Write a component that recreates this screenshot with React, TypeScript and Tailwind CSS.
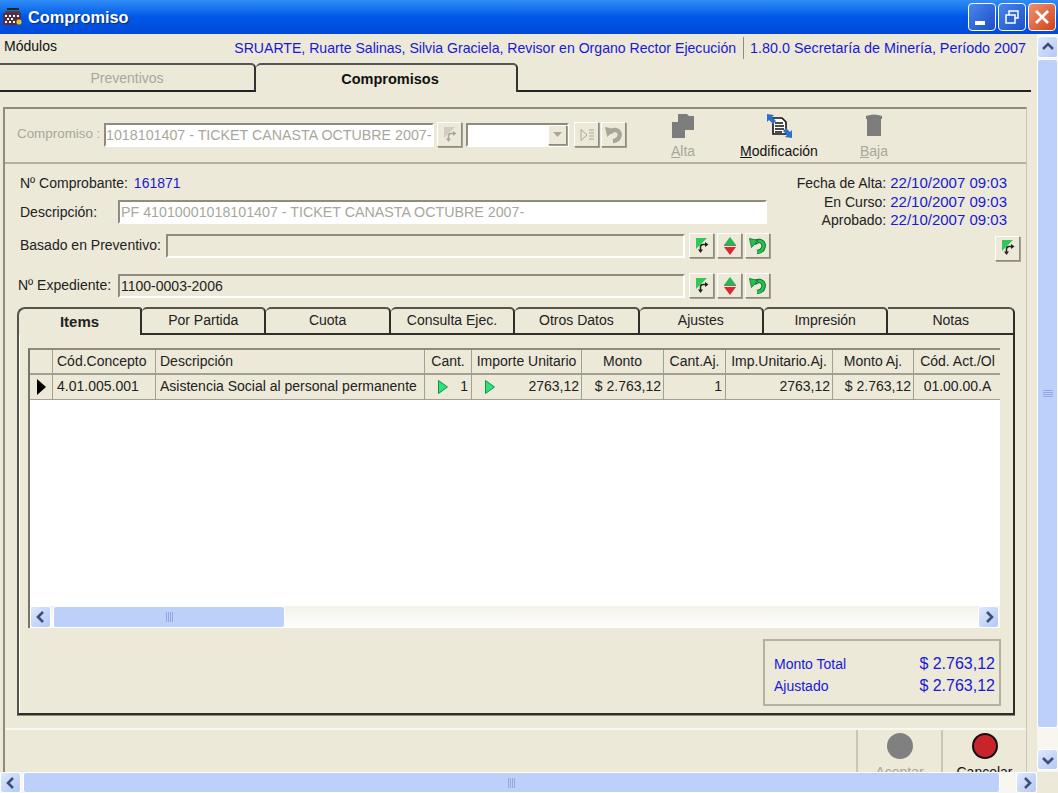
import type { ReactNode } from 'react';

const raised = 'border border-t-white border-l-white border-r-[#8c8a7c] border-b-[#8c8a7c] shadow-[1px_1px_0_#a5a294]';
const sunken = 'border-2 border-t-[#8f8c7e] border-l-[#8f8c7e] border-r-white border-b-white';

function NavIcon({ faded }: { faded?: boolean }) {
  return (
    <svg width="16" height="18" viewBox="0 0 16 18">
      <path d="M2 1h11L2 12z" fill={faded ? '#cfcdc0' : '#2fc75a'} />
      <path d="M12 7.500H9Q6.500 7.500 6.500 10v3" fill="none" stroke={faded ? '#a8a699' : '#222'} strokeWidth="1.500" />
      <path d="M11 5l3.500 2.500L11 10z" fill={faded ? '#a8a699' : '#222'} />
      <path d="M4 12.500h5L6.500 16z" fill={faded ? '#a8a699' : '#222'} />
    </svg>
  );
}

function UpDownIcon() {
  return (
    <svg width="16" height="20" viewBox="0 0 16 20">
      <path d="M8 1l6 8H2z" fill="#25b84f" />
      <path d="M2 9.500h12" stroke="#777" strokeWidth="1" />
      <path d="M2 11h12l-6 8z" fill="#dc2630" />
    </svg>
  );
}

function UndoIcon({ faded }: { faded?: boolean }) {
  const c = faded ? '#a8a699' : '#22c24f';
  return (
    <svg width="20" height="20" viewBox="0 0 20 20">
      <path d="M6 8Q8 4.500 12 5Q16.500 6.500 15.500 11Q14.500 15.500 9 16" fill="none" stroke={faded ? c : '#0b6f2a'} strokeWidth="4.400" />
      <path d="M6 8Q8 4.500 12 5Q16.500 6.500 15.500 11Q14.500 15.500 9 16" fill="none" stroke={c} strokeWidth="2.600" />
      <path d="M1.500 2.500l8.500 2-6.500 7z" fill={c} stroke={faded ? c : '#0b6f2a'} strokeWidth="0.800" />
    </svg>
  );
}

function Bevel({ children, className = '' }: { children?: ReactNode; className?: string }) {
  return (
    <div className={'flex h-[25px] w-[25px] shrink-0 items-center justify-center bg-[#ece9d8] ' + raised + ' ' + className}>
      {children}
    </div>
  );
}

function RowTools() {
  return (
    <div className="ml-[4px] flex gap-[3px]">
      <Bevel><NavIcon /></Bevel>
      <Bevel><UpDownIcon /></Bevel>
      <Bevel><UndoIcon /></Bevel>
    </div>
  );
}

function Chevron({ dir }: { dir: 'left' | 'right' | 'up' | 'down' }) {
  const d = {
    left: 'M10 3L5 8l5 5',
    right: 'M6 3l5 5-5 5',
    up: 'M3 10l5-5 5 5',
    down: 'M3 6l5 5 5-5',
  }[dir];
  return (
    <svg width="16" height="16" viewBox="0 0 16 16">
      <path d={d} fill="none" stroke="#3d4f7c" strokeWidth="2.6" />
    </svg>
  );
}

function ScrollBtn({ dir, className = '' }: { dir: 'left' | 'right' | 'up' | 'down'; className?: string }) {
  return (
    <div className={'flex shrink-0 items-center justify-center rounded-[3px] border border-white bg-gradient-to-br from-[#dfe8fd] to-[#b4c8f5] ' + className}>
      <Chevron dir={dir} />
    </div>
  );
}

function Grip({ vertical }: { vertical?: boolean }) {
  return (
    <div className={vertical ? 'flex flex-col gap-[1px]' : 'flex gap-[1px]'}>
      {[0, 1, 2, 3].map((i) => (
        <div key={i} className={(vertical ? 'h-[1px] w-[10px]' : 'h-[10px] w-[1px]') + ' bg-[#8fa8e0]'} />
      ))}
    </div>
  );
}

function ToolAction({ icon, label, hot, disabled, className = '' }: { icon: ReactNode; label: string; hot: string; disabled?: boolean; className?: string }) {
  return (
    <div className={'flex flex-col items-center ' + className}>
      <div className="flex h-[28px] items-center">{icon}</div>
      <div className={'mt-[3px] text-[14px] leading-[16px] ' + (disabled ? 'text-[#a9a79b]' : 'text-[#111]')}>
        <span className="underline">{hot}</span>
        {label}
      </div>
    </div>
  );
}

const columns = [
  { w: 'w-[23px]', head: '', cell: '', h: '', c: '' },
  { w: 'w-[103px]', head: 'Cód.Concepto', cell: '4.01.005.001', h: 'text-left pl-[4px]', c: 'text-left pl-[4px]' },
  { w: 'w-[269px]', head: 'Descripción', cell: 'Asistencia Social al personal permanente', h: 'text-left pl-[4px]', c: 'text-left pl-[4px]' },
  { w: 'w-[47px]', head: 'Cant.', cell: '1', h: 'text-center', c: 'text-right pr-[3px]' },
  { w: 'w-[110px]', head: 'Importe Unitario', cell: '2763,12', h: 'text-center', c: 'text-right pr-[2px]' },
  { w: 'w-[82px]', head: 'Monto', cell: '$ 2.763,12', h: 'text-center', c: 'text-right pr-[2px]' },
  { w: 'w-[62px]', head: 'Cant.Aj.', cell: '1', h: 'text-center', c: 'text-right pr-[3px]' },
  { w: 'w-[107px]', head: 'Imp.Unitario.Aj.', cell: '2763,12', h: 'text-center', c: 'text-right pr-[2px]' },
  { w: 'w-[81px]', head: 'Monto Aj.', cell: '$ 2.763,12', h: 'text-center', c: 'text-right pr-[2px]' },
  { w: 'w-[88px]', head: 'Cód. Act./Ol', cell: '01.00.00.A', h: 'text-center', c: 'text-center' },
];

function Arrow() {
  return (
    <svg width="12" height="16" viewBox="0 0 12 16" className="absolute left-[12px] top-[4px]">
      <path d="M1.500 1.500L10.500 8l-9 6.500z" fill="#2ee27a" stroke="#12924a" strokeWidth="1" />
    </svg>
  );
}

function ItemsGrid() {
  return (
    <div className="flex h-[280px] w-[972px] flex-col overflow-hidden border-l-2 border-t-2 border-l-[#77756a] border-t-[#8f8c7e] bg-white">
      <div className="flex h-[25px] shrink-0 bg-[#ece9d8]">
        {columns.map((col, i) => (
          <div key={i} className={col.w + ' ' + col.h + ' shrink-0 overflow-hidden whitespace-nowrap border-b-2 border-r border-b-[#a3a091] border-r-[#a3a091] text-[14px] leading-[22px] text-[#222]'}>
            {col.head}
          </div>
        ))}
      </div>
      <div className="flex h-[25px] shrink-0 bg-[#ece9d8]">
        {columns.map((col, i) => (
          <div key={i} className={col.w + ' ' + col.c + ' relative shrink-0 overflow-hidden whitespace-nowrap border-b border-r border-b-[#a3a091] border-r-[#a3a091] text-[14px] leading-[22px] text-[#222]'}>
            {i === 0 && (
              <svg width="12" height="16" viewBox="0 0 12 16" className="absolute left-[6px] top-[4px]">
                <path d="M1 0l9 8-9 8z" fill="#000" />
              </svg>
            )}
            {(i === 3 || i === 4) && <Arrow />}
            {col.cell}
          </div>
        ))}
      </div>
      <div className="flex-1" />
      <div className="flex h-[22px] shrink-0 items-stretch gap-[2px] bg-gradient-to-b from-[#f2f1ea] to-white pr-[1px]">
        <ScrollBtn dir="left" className="w-[21px]" />
        <div className="flex w-[232px] items-center justify-center rounded-[3px] border border-white bg-[#bdd0fa]">
          <Grip />
        </div>
        <div className="flex-1" />
        <ScrollBtn dir="right" className="w-[21px]" />
      </div>
    </div>
  );
}

const tabs = ['Por Partida', 'Cuota', 'Consulta Ejec.', 'Otros Datos', 'Ajustes', 'Impresión'];

function DetailTabs() {
  return (
    <div className="ml-[12px] mt-[9px] w-[998px]">
      <div className="flex h-[28px] items-stretch">
        <div className="w-[125px] shrink-0 rounded-tl-[8px] rounded-tr-[3px] border-l-2 border-r-2 border-t-2 border-l-[#55534a] border-r-[#2f2e29] border-t-[#55534a] pt-[3px] text-center text-[15px] font-bold leading-[20px] text-[#222]">
          Items
        </div>
        {tabs.map((t) => (
          <div key={t} className="w-[124.4px] shrink-0 rounded-t-[5px] border-b-2 border-r-2 border-t-2 border-b-[#2f2e29] border-r-[#2f2e29] border-t-[#55534a] text-center text-[14px] leading-[22px] text-[#222]">
            {t}
          </div>
        ))}
        <div className="flex-1 rounded-tr-[6px] border-b-2 border-r-2 border-t-2 border-b-[#2f2e29] border-r-[#2f2e29] border-t-[#55534a] text-center text-[14px] leading-[22px] text-[#222]">
          Notas
        </div>
      </div>
      <div className="h-[380px] border-b-2 border-l-2 border-r-2 border-b-[#2f2e29] border-l-[#55534a] border-r-[#2f2e29] pl-[9px] pt-[13px] shadow-[inset_1px_0_0_white,0_1px_0_#8f8c7e]">
        <ItemsGrid />
        <div className="ml-[735px] mt-[11px] h-[67px] w-[238px] border-2 border-[#b4b1a2] pl-[9px] pr-[4px] pt-[12px] text-[14px] leading-[22px] text-[#1818d6]">
          <div className="flex justify-between">
            <span>Monto Total</span>
            <span className="text-[16px]">$ 2.763,12</span>
          </div>
          <div className="flex justify-between">
            <span>Ajustado</span>
            <span className="text-[16px]">$ 2.763,12</span>
          </div>
        </div>
      </div>
    </div>
  );
}

function Toolbar() {
  return (
    <div className="flex h-[55px] items-start border-b-2 border-b-[#b4b1a2]">
      <div className="mt-[13px] flex items-center pl-[12px]">
        <span className="w-[87px] whitespace-nowrap text-[13.4px] text-[#a9a79b]">Compromiso :</span>
        <div className={'h-[24px] w-[330px] overflow-hidden whitespace-nowrap bg-white text-[14.25px] leading-[20px] text-[#a9a79b] ' + sunken}>
          1018101407 - TICKET CANASTA OCTUBRE 2007-
        </div>
        <Bevel className="ml-[3px]"><NavIcon faded /></Bevel>
        <div className={'ml-[4px] flex h-[24px] w-[103px] justify-end bg-white ' + sunken}>
          <div className={'flex w-[19px] items-center justify-center bg-[#ece9d8] ' + raised}>
            <svg width="9" height="5" viewBox="0 0 9 5"><path d="M0 0h9L4.500 5z" fill="#a8a699" /></svg>
          </div>
        </div>
        <Bevel className="ml-[5px]">
          <svg width="16" height="16" viewBox="0 0 16 16" fill="none" stroke="#a8a699">
            <path d="M2 2.500l6 5.500-6 5.500z" />
            <path d="M10 3h5M10 6h5M10 9h5M10 12h5" />
          </svg>
        </Bevel>
        <Bevel className="ml-[2px]"><UndoIcon faded /></Bevel>
      </div>
      <div className="ml-[32px] mt-[3px] flex">
        <ToolAction
          className="w-[50px]"
          disabled
          hot="A"
          label="lta"
          icon={
            <svg width="24" height="26" viewBox="0 0 24 26">
              <path d="M7 1h9l2 2h5v14h-9v8H1V9h6z" fill="#7d7d7d" />
            </svg>
          }
        />
        <ToolAction
          className="ml-[21px] w-[100px]"
          hot="M"
          label="odificación"
          icon={
            <svg width="28" height="26" viewBox="0 0 28 26">
              <path d="M8 5h9l4 4v12H8z" fill="#fff" stroke="#111" strokeWidth="1.600" />
              <path d="M10 10h8M10 13h9M10 16h9M10 19h7" stroke="#111" strokeWidth="1.400" />
              <path d="M2 1l7 1-2 2 4 4-3 3-4-4-2 2z" fill="#2f6fc4" />
              <path d="M27 25l-7-1 2-2-4-4 3-3 4 4 2-2z" fill="#2f6fc4" />
            </svg>
          }
        />
        <ToolAction
          className="ml-[20px] w-[50px]"
          disabled
          hot="B"
          label="aja"
          icon={
            <svg width="18" height="24" viewBox="0 0 18 24">
              <path d="M1 2q8-3 16 0v3h-1v17H2V5H1z" fill="#7d7d7d" />
            </svg>
          }
        />
      </div>
    </div>
  );
}

function FormArea() {
  return (
    <div className="flex h-[134px]">
      <div className="w-[770px] shrink-0 text-[14px] text-[#222]">
        <div className="mt-[10px] flex h-[18px] items-center pl-[15px] leading-[18px]">
          <span>Nº Comprobante:</span>
          <span className="ml-[6px] text-[#1818d6]">161871</span>
        </div>
        <div className="mt-[8px] flex h-[24px] items-center pl-[15px]">
          <span className="w-[98px]">Descripción:</span>
          <div className={'h-[24px] w-[649px] overflow-hidden whitespace-nowrap bg-white pl-[1px] text-[14.25px] leading-[20px] text-[#a9a79b] ' + sunken}>
            PF 41010001018101407 - TICKET CANASTA OCTUBRE 2007-
          </div>
        </div>
        <div className="mt-[9px] flex h-[25px] items-center pl-[15px]">
          <span className="w-[146px] whitespace-nowrap">Basado en Preventivo:</span>
          <div className={'h-[24px] w-[519px] ' + sunken} />
          <RowTools />
        </div>
        <div className="mt-[15px] flex h-[25px] items-center pl-[13px]">
          <span className="w-[100px] whitespace-nowrap">Nº Expediente:</span>
          <div className={'h-[24px] w-[567px] pl-[1px] leading-[20px] ' + sunken}>1100-0003-2006</div>
          <RowTools />
        </div>
      </div>
      <div className="flex-1 pr-[19px] pt-[10px] text-[14px] leading-[18.5px] text-[#222]">
        <div className="flex justify-end gap-[4px]"><span>Fecha de Alta:</span><span className="text-[15px] text-[#1818d6]">22/10/2007 09:03</span></div>
        <div className="flex justify-end gap-[4px]"><span>En Curso:</span><span className="text-[15px] text-[#1818d6]">22/10/2007 09:03</span></div>
        <div className="flex justify-end gap-[4px]"><span>Aprobado:</span><span className="text-[15px] text-[#1818d6]">22/10/2007 09:03</span></div>
        <div className="mt-[6px] flex justify-end">
          <Bevel className="-mr-[13px]"><NavIcon /></Bevel>
        </div>
      </div>
    </div>
  );
}

function FooterButton({ label, color, ring, text }: { label: string; color: string; ring: string; text: string }) {
  return (
    <div className="flex w-[85px] flex-col items-center border-l-2 border-l-[#c9c6b6] pt-[3px]">
      <div className={'h-[26px] w-[26px] rounded-full border-2 ' + color + ' ' + ring} />
      <div className={'mt-[5px] text-[14px] leading-[16px] ' + text}>{label}</div>
    </div>
  );
}

export default function App() {
  return (
    <div className="flex h-[793px] w-[1058px] flex-col overflow-hidden bg-[#ece9d8] font-['Liberation_Sans',sans-serif]">
      {/* Title bar */}
      <div className="flex h-[34px] shrink-0 items-center bg-gradient-to-b from-[#2f8cf5] via-[#0058e6] to-[#0048d8] pl-[3px] pr-[2px]">
        <svg width="20" height="20" viewBox="0 0 20 20">
          <rect x="4" y="1" width="12" height="2" fill="#222" />
          <rect x="2" y="4" width="15" height="2" fill="#444" />
          <rect x="0" y="6" width="18" height="12" fill="#5a2f3a" />
          <path d="M2 8h2v2H2zM6 8h2v2H6zM10 8h2v2h-2zM14 8h2v2h-2zM4 11h2v2H4zM8 11h2v2H8zM2 14h2v2H2zM6 14h2v2H6zM10 14h2v2h-2z" fill="#fff" />
          <circle cx="16" cy="15" r="3" fill="#d8c64a" stroke="#333" strokeWidth="0.600" />
        </svg>
        <span className="ml-[5px] text-[16.300px] font-bold text-white [text-shadow:1px_1px_1px_#0a2a80]">Compromiso</span>
        <div className="ml-auto flex gap-[2px]">
          <div className="relative h-[28px] w-[28px] rounded-[4px] border border-white bg-gradient-to-br from-[#4a86ee] to-[#1a4fc8]">
            <div className="absolute bottom-[5px] left-[6px] h-[4px] w-[10px] bg-white" />
          </div>
          <div className="flex h-[28px] w-[28px] items-center justify-center rounded-[4px] border border-white bg-gradient-to-br from-[#4a86ee] to-[#1a4fc8]">
            <svg width="16" height="16" viewBox="0 0 16 16" fill="none" stroke="#fff" strokeWidth="1.500">
              <rect x="5" y="2" width="9" height="7" />
              <rect x="2" y="6" width="9" height="8" fill="#2a62d8" />
            </svg>
          </div>
          <div className="flex h-[28px] w-[28px] items-center justify-center rounded-[4px] border border-white bg-gradient-to-br from-[#f0906a] to-[#d0401a]">
            <svg width="16" height="16" viewBox="0 0 16 16" stroke="#fff" strokeWidth="2.800">
              <path d="M2 2l12 12M14 2L2 14" />
            </svg>
          </div>
        </div>
      </div>

      <div className="flex h-[738px] shrink-0">
        <div className="w-[1037px] shrink-0 overflow-hidden">
          {/* Module row */}
          <div className="flex h-[29px] items-start text-[14px]">
            <span className="ml-[4px] mt-[2px] text-[#111]">Módulos</span>
            <div className="ml-auto mr-[11px] mt-[3px] flex text-[#1818d6]">
              <span className="border-r border-r-[#8f8c7e] pr-[7px] text-[14.100px] leading-[22px]">SRUARTE, Ruarte Salinas, Silvia Graciela, Revisor en Organo Rector Ejecución</span>
              <span className="pl-[6px] text-[14.350px] leading-[22px]">1.80.0 Secretaría de Minería, Período 2007</span>
            </div>
          </div>

          {/* Outer tabs */}
          <div className="flex h-[29px] w-[1031px] items-stretch">
            <div className="w-[256px] shrink-0 rounded-tr-[5px] border-b-2 border-r-2 border-t-2 border-b-[#222] border-r-[#333] border-t-[#555] pt-[3px] text-center text-[14px] leading-[20px] text-[#a9a79b]">
              Preventivos
            </div>
            <div className="w-[262px] shrink-0 rounded-t-[5px] border-r-2 border-t-2 border-r-[#333] border-t-[#555] pl-[8px] pt-[4px] text-center text-[14.500px] font-bold leading-[20px] text-[#111]">
              Compromisos
            </div>
            <div className="flex-1 border-b-2 border-b-[#222]" />
          </div>

          {/* Main panel */}
          <div className="ml-[3px] mt-[15px] h-[665px] w-[1024px] border-l-2 border-r border-t-2 border-l-[#8f8c7e] border-r-[#c9c6b6] border-t-[#8f8c7e]">
            <Toolbar />
            <FormArea />
            <DetailTabs />
            <div className="mt-[13px] flex h-[60px] justify-end border-t-2 border-t-[#f8f7f0]">
              <FooterButton label="Aceptar" color="bg-[#808080]" ring="border-[#808080]" text="text-[#a9a79b]" />
              <FooterButton label="Cancelar" color="bg-[#c8242c]" ring="border-[#111]" text="text-[#111]" />
            </div>
          </div>
        </div>

        {/* Vertical scrollbar */}
        <div className="flex w-[21px] shrink-0 flex-col bg-[#f7f6ef] py-[2px]">
          <ScrollBtn dir="up" className="h-[22px]" />
          <div className="mt-[1px] flex h-[669px] items-center justify-center rounded-[3px] border border-white bg-[#bdd0fa]">
            <Grip vertical />
          </div>
          <div className="flex-1" />
          <ScrollBtn dir="down" className="h-[21px]" />
        </div>
      </div>

      {/* Horizontal scrollbar */}
      <div className="flex h-[21px] shrink-0">
        <div className="flex w-[1037px] shrink-0 gap-[2px] bg-[#f7f6ef]">
          <ScrollBtn dir="left" className="w-[21px]" />
          <div className="flex w-[977px] items-center justify-center rounded-[3px] border border-white bg-[#bdd0fa]">
            <Grip />
          </div>
          <div className="flex-1" />
          <ScrollBtn dir="right" className="w-[21px]" />
        </div>
      </div>
    </div>
  );
}
